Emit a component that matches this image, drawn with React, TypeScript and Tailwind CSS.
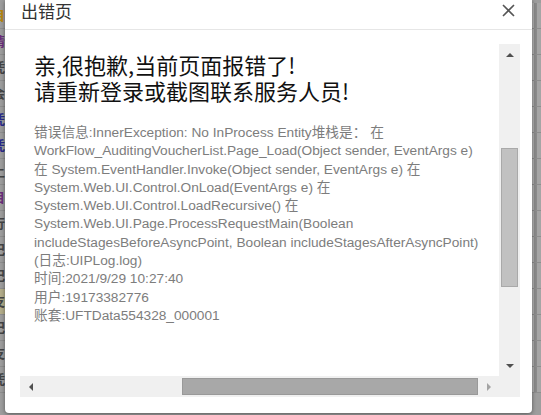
const ROWS = [
  { c: 'text-[#b8860b]', t: '目' },
  { c: 'text-[#6b2d7b]', t: '请' },
  { c: 'text-[#444]', t: '凭' },
  { c: 'text-[#444]', t: '会' },
  { c: 'text-[#2a2a8a]', t: '凭' },
  { c: 'text-[#2a2a8a]', t: '凭' },
  { c: 'text-[#444]', t: '上' },
  { c: 'text-[#6b2d7b]', t: '目' },
  { c: 'text-[#444]', t: '行' },
  { c: 'text-[#444]', t: '记' },
  { c: 'text-[#444]', t: '记' },
  { c: 'text-[#444]', t: '支' },
  { c: 'text-[#444]', t: '记' },
  { c: 'text-[#444]', t: '支' },
  { c: 'text-[#444]', t: '凭' },
];

const STACK = [
  '错误信息:InnerException: No InProcess Entity堆栈是： 在',
  'WorkFlow_AuditingVoucherList.Page_Load(Object sender, EventArgs e)',
  '在 System.EventHandler.Invoke(Object sender, EventArgs e) 在',
  'System.Web.UI.Control.OnLoad(EventArgs e) 在',
  'System.Web.UI.Control.LoadRecursive() 在',
  'System.Web.UI.Page.ProcessRequestMain(Boolean',
  'includeStagesBeforeAsyncPoint, Boolean includeStagesAfterAsyncPoint)',
  '(日志:UIPLog.log)',
  '时间:2021/9/29 10:27:40',
  '用户:19173382776',
  '账套:UFTData554328_000001',
];

export default function App() {
  return (
    <div className="relative w-[541px] h-[415px] overflow-hidden bg-[#9d9d9d] font-['Liberation_Sans','Noto_Sans_CJK_SC',sans-serif]">
      {/* page behind the mask */}
      <div className="flex flex-col pt-[3px]">
        {ROWS.map((r, i) => (
          <div key={i} className={`h-[26px] flex items-center border-b border-[#8e8e8e] ${i === 11 ? 'bg-[#b3ad8a]' : ''}`}>
            <span className={`ml-[-8px] text-[13px] font-bold ${r.c}`}>{r.t}</span>
            <div className="ml-auto w-[9px] h-full flex">
              <div className="w-[2px] h-full bg-[#b0b0b0]" />
              <div className="w-[3px] h-full bg-[#8a8a8a]" />
              <div className="w-[4px] h-full bg-[#a5a5a5]" />
            </div>
          </div>
        ))}
      </div>

      {/* dialog */}
      <div className="absolute left-[5px] top-0 w-[527px] h-[413px] bg-white rounded-b-[4px] shadow-[0_1px_4px_rgba(0,0,0,0.45)] flex flex-col">
        <div className="h-[30px] flex items-center justify-between border-b border-[#e6e6e6] pl-[16px] pr-[16px] pb-[8px]">
          <span className="text-[17px] leading-[17px] text-[#333] font-['Noto_Sans_CJK_SC',sans-serif]">出错页</span>
          <svg width="13" height="13" viewBox="0 0 13 13" className="mr-[1px]">
            <path d="M1 1 L12 12 M12 1 L1 12" stroke="#555" strokeWidth="1.6" fill="none" />
          </svg>
        </div>

        <div className="mt-[14px] ml-[15px] w-[500px] h-[353px] grid grid-cols-[479px_21px] grid-rows-[332px_21px]">
          {/* content */}
          <div className="overflow-hidden pl-[14px] pt-[7px] bg-white">
            <div className="text-[22px] leading-[26px] text-[#111] font-['Noto_Sans_CJK_SC',sans-serif] whitespace-nowrap">
              <div>亲,很抱歉,当前页面报错了!</div>
              <div>请重新登录或截图联系服务人员!</div>
            </div>
            <div className="mt-[21px] text-[13.7px] leading-[18.3px] text-[#7d7d7d] whitespace-nowrap">
              {STACK.map((l, i) => (
                <div key={i}>{l}</div>
              ))}
            </div>
          </div>

          {/* vertical scrollbar */}
          <div className="bg-[#f0f0f0] flex flex-col items-center">
            <div className="h-[21px] w-full flex items-center justify-center">
              <svg width="8" height="4" viewBox="0 0 8 4"><path d="M0 4 L4 0 L8 4 Z" fill="#505050" /></svg>
            </div>
            <div className="mt-[83px] w-[17px] h-[139px] bg-[#c1c1c1] border border-[#a9a9a9]" />
            <div className="flex-1" />
            <div className="h-[21px] w-full flex items-center justify-center">
              <svg width="8" height="4" viewBox="0 0 8 4"><path d="M0 0 L8 0 L4 4 Z" fill="#505050" /></svg>
            </div>
          </div>

          {/* horizontal scrollbar */}
          <div className="bg-[#f0f0f0] flex items-center">
            <div className="w-[21px] h-full flex items-center justify-center">
              <svg width="4" height="8" viewBox="0 0 4 8"><path d="M4 0 L0 4 L4 8 Z" fill="#505050" /></svg>
            </div>
            <div className="ml-[141px] w-[296px] h-[17px] bg-[#a8a8a8] border border-[#999]" />
            <div className="flex-1" />
            <div className="w-[21px] h-full flex items-center justify-center">
              <svg width="4" height="8" viewBox="0 0 4 8"><path d="M0 0 L4 4 L0 8 Z" fill="#a3a3a3" /></svg>
            </div>
          </div>
          <div className="bg-[#f0f0f0]" />
        </div>
      </div>
    </div>
  );
}
